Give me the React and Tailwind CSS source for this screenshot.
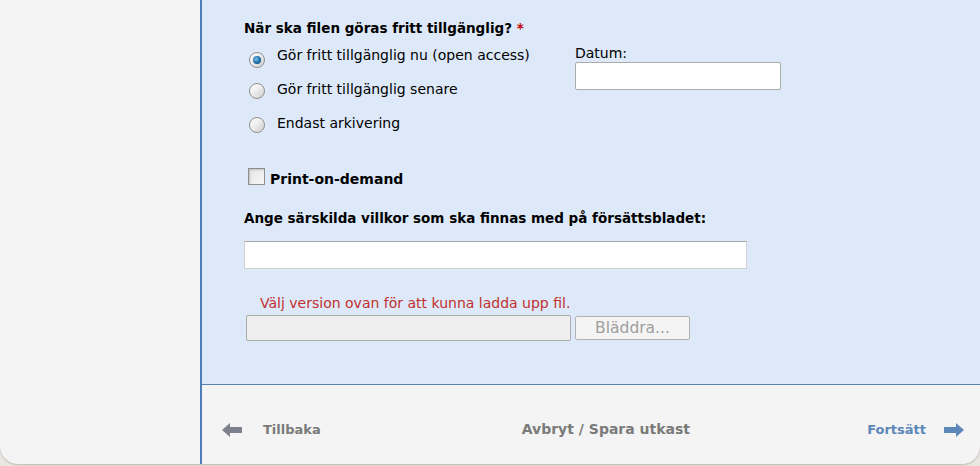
import React, { useState } from 'react';

const font = { fontFamily: '"DejaVu Sans", Verdana, sans-serif' };

const Radio = ({ checked, onClick }) => (
    <span
        onClick={onClick}
        className="relative inline-flex h-[16px] w-[16px] shrink-0 items-center justify-center rounded-full border border-[#8d8d8d] bg-gradient-to-br from-[#ffffff] via-[#ececec] to-[#c9c9c9] shadow-[inset_0_0_1px_#fff]"
    >
        {checked && (
            <span className="h-[8px] w-[8px] rounded-full bg-[radial-gradient(circle_at_40%_40%,#7fc3ee,#1a6aa6_55%,#0b3a60)]" />
        )}
    </span>
);

const Arrow = ({ dir, color }) => (
    <svg width="20" height="16" viewBox="0 0 20 16" className={dir === 'left' ? '' : 'rotate-180'}>
        <polygon points="0,8 8,1 8,5 20,5 20,11 8,11 8,15" fill={color} />
    </svg>
);

const App = () => {
    const [choice, setChoice] = useState(0);
    const [pod, setPod] = useState(false);
    const options = ['Gör fritt tillgänglig nu (open access)', 'Gör fritt tillgänglig senare', 'Endast arkivering'];

    return (
        <div className="h-[466px] w-[980px] overflow-hidden bg-[#e9e7e2]" style={font}>
            <div className="flex h-[464px] overflow-hidden rounded-b-[18px] bg-[#f4f4f4] shadow-[0_1px_2px_#bdb8ae]">
                <div className="w-[200px] shrink-0" />
                <div className="flex flex-1 flex-col border-l-2 border-[#4f7db5]">
                    <div className="h-[385px] border-b border-[#5a80b4] bg-[#dde9f8] pl-[42px] pt-[19px] text-[14px] text-black">
                        <div className="flex">
                            <div className="w-[331px]">
                                <div className="text-[13.5px] font-bold leading-[18px]">
                                    När ska filen göras fritt tillgänglig? <span className="text-[#c00000]">*</span>
                                </div>
                                <div className="mt-[10px] flex flex-col gap-[18px] pl-[5px]">
                                    {options.map((o, i) => (
                                        <label key={o} className="flex h-[16px] items-start gap-[12px]" onClick={() => setChoice(i)}>
                                            <span className="mt-[2px]"><Radio checked={choice === i} /></span>
                                            <span className="leading-[16px]">{o}</span>
                                        </label>
                                    ))}
                                </div>
                            </div>
                            <div className="pt-[26px]">
                                <div className="leading-[16px]">Datum:</div>
                                <input className="mt-[1px] h-[28px] w-[206px] rounded-[2px] border border-[#ababab] bg-white" />
                            </div>
                        </div>

                        <label className="mt-[32px] flex items-center gap-[5px] pl-[4px]" onClick={() => setPod(!pod)}>
                            <span className="h-[17px] w-[17px] border border-[#8f8f8f] bg-gradient-to-br from-[#e4e4e4] to-[#f8f8f8] shadow-[inset_1px_1px_2px_#c0c0c0]" />
                            <span className="mt-[6px] text-[14px] font-bold">Print-on-demand</span>
                        </label>

                        <div className="mt-[19px] text-[13.5px] font-bold leading-[18px]">Ange särskilda villkor som ska finnas med på försättsbladet:</div>
                        <input className="mt-[14px] block h-[28px] w-[503px] border border-[#d0d0d0] border-t-[#a8a8a8] bg-white" />

                        <div className="mt-[25px] pl-[16px] leading-[18px] text-[#c22f2f]">Välj version ovan för att kunna ladda upp fil.</div>
                        <div className="mt-[3px] flex items-center gap-[4px] pl-[2px]">
                            <div className="h-[26px] w-[325px] rounded-[2px] border border-[#acacac] bg-[#efefef]" />
                            <button disabled className="h-[24px] w-[115px] rounded-[2px] border border-[#b2b2b2] bg-[#f4f4f4] text-[15.5px] leading-[20px] text-[#9f9f9f]">
                                Bläddra...
                            </button>
                        </div>
                    </div>
                    <div className="flex flex-1 items-center pl-[20px] pr-[16px] pt-[10px] text-[13px] font-bold">
                        <div className="flex items-center gap-[21px] text-[#7a7a7a]">
                            <Arrow dir="left" color="#7d818d" />
                            <span>Tillbaka</span>
                        </div>
                        <div className="ml-[201px] text-[14px] text-[#7a7a7a]">Avbryt / Spara utkast</div>
                        <div className="ml-auto flex items-center gap-[18px] text-[#5b87b9]">
                            <span>Fortsätt</span>
                            <Arrow dir="right" color="#5b87b9" />
                        </div>
                    </div>
                </div>
            </div>
        </div>
    );
};

export default App;
